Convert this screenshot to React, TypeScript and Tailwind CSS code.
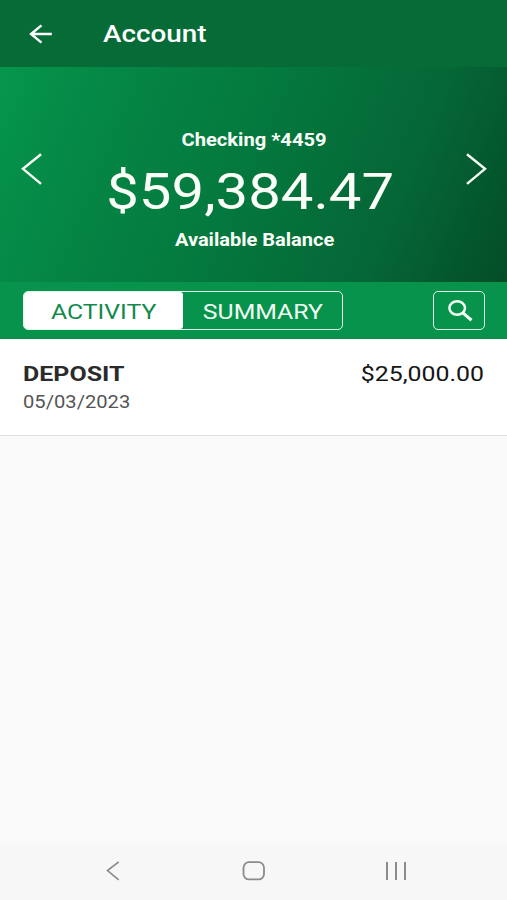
interface Transaction {
  id: number;
  title: string;
  date: string;
  amount: string;
}

const transactions: Transaction[] = [
  { id: 1, title: 'DEPOSIT', date: '05/03/2023', amount: '$25,000.00' },
];

function Header() {
  return (
    <header className="h-[67px] flex items-center bg-[#076b38] pl-[29px] text-white">
      <button aria-label="Back">
        <svg className="block w-[24px] h-[20px]" viewBox="0 0 24 20" fill="none" stroke="currentColor" strokeWidth="2.4">
          <path d="M12.5 1.3 L2 10 L12.5 18.7 M2 10 H22.8" />
        </svg>
      </button>
      <h1 className="ml-[50px] pt-[3px] text-[23px] leading-[26px] font-medium origin-left scale-x-[1.21]">Account</h1>
    </header>
  );
}

function BalanceCard() {
  return (
    <section className="h-[215px] flex items-start justify-between pl-[21px] pr-[20px] bg-[linear-gradient(113deg,#05964b_0%,#058745_20%,#04783e_48%,#056636_76%,#034d27_100%)] text-[#fbfff8]">
      <button aria-label="Previous account" className="mt-[86px]">
        <svg className="block w-[21px] h-[32px]" viewBox="0 0 21 32" fill="none" stroke="currentColor" strokeWidth="2.4">
          <path d="M20 1.2 L2 15.8 L20 30.8" />
        </svg>
      </button>
      <div className="pt-[61px] flex flex-col items-center whitespace-nowrap">
        <p className="text-[17.5px] leading-[24px] font-bold scale-x-[1.15]">Checking *4459</p>
        <p className="mt-[11px] mr-[7px] text-[50.5px] leading-[58px] scale-x-[1.15]">$59,384.47</p>
        <p className="mt-[7px] ml-px text-[17.5px] leading-[24px] font-bold scale-x-[1.145]">Available Balance</p>
      </div>
      <button aria-label="Next account" className="mt-[86px]">
        <svg className="block w-[21px] h-[32px]" viewBox="0 0 21 32" fill="none" stroke="currentColor" strokeWidth="2.4">
          <path d="M1 1.2 L19 15.8 L1 30.8" />
        </svg>
      </button>
    </section>
  );
}

function TabBar() {
  return (
    <div className="h-[57px] flex items-center justify-between bg-[#07934b] pl-[23px] pr-[22px]">
      <div className="w-[320px] h-[39px] flex rounded-[5px] border border-[#e4f8ea] overflow-hidden text-[21px] leading-[24px]">
        <button className="w-[159px] pt-[2px] bg-white rounded-r-[3px] text-[#128a4d]">
          <span className="inline-block scale-x-[1.18]">ACTIVITY</span>
        </button>
        <button className="flex-1 pt-[2px] text-[#f2fff4]">
          <span className="inline-block scale-x-[1.18]">SUMMARY</span>
        </button>
      </div>
      <button aria-label="Search" className="w-[52px] h-[39px] flex items-center justify-center rounded-[5px] border border-[#e4f8ea] pl-[2px] text-[#f2fff4]">
        <svg className="block w-[25px] h-[22px]" viewBox="0 0 25 22" fill="none" stroke="currentColor">
          <ellipse cx="9.2" cy="8" rx="7.8" ry="6.7" strokeWidth="2.5" />
          <path d="M14.6 12.6 L23.5 20.2" strokeWidth="3.1" />
        </svg>
      </button>
    </div>
  );
}

function TransactionRow({ transaction }: { transaction: Transaction }) {
  return (
    <li className="h-[97px] flex items-start justify-between bg-white border-b border-[#dedede] px-[23px] pt-[23px]">
      <div>
        <p className="text-[21px] leading-[24px] font-bold text-[#2b2b2b] origin-left scale-x-[1.19]">{transaction.title}</p>
        <p className="mt-[5px] text-[18px] leading-[22px] text-[#555] origin-left scale-x-[1.12]">{transaction.date}</p>
      </div>
      <p className="text-[21px] leading-[24px] text-[#151515] origin-right scale-x-[1.185]">{transaction.amount}</p>
    </li>
  );
}

function SystemNav() {
  return (
    <nav className="h-[56px] flex items-center justify-between bg-[#f7f7f7] pl-[106px] pr-[100px] pb-[2px] text-[#8b8b8b]">
      <svg className="block w-[14px] h-[20px]" viewBox="0 0 14 20" fill="none" stroke="currentColor" strokeWidth="1.7">
        <path d="M12.7 0.8 L1.5 9.6 L12.7 18.8" />
      </svg>
      <svg className="block w-[24px] h-[20px] ml-[2px]" viewBox="0 0 24 20" fill="none" stroke="currentColor" strokeWidth="1.8">
        <rect x="1.5" y="1.2" width="20.5" height="17.2" rx="5.5" />
      </svg>
      <svg className="block w-[22px] h-[20px]" viewBox="0 0 22 20" fill="none" stroke="currentColor" strokeWidth="2">
        <path d="M2 1 V19 M11 1 V19 M20 1 V19" />
      </svg>
    </nav>
  );
}

export default function App() {
  return (
    <div className="w-full h-screen flex flex-col bg-[#f9f9f9] font-['Roboto',sans-serif] overflow-hidden">
      <Header />
      <BalanceCard />
      <TabBar />
      <ul className="flex-1">
        {transactions.map((transaction) => (
          <TransactionRow key={transaction.id} transaction={transaction} />
        ))}
      </ul>
      <SystemNav />
    </div>
  );
}
